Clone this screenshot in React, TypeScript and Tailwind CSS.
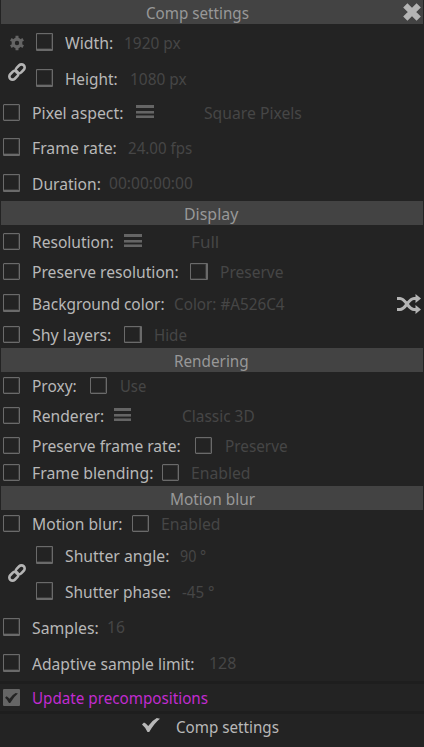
import { useLayoutEffect, useRef, useState, type ReactNode } from 'react';

function Fit({ children, className }: { children: string; className: string }) {
  const outer = useRef<HTMLSpanElement>(null);
  const inner = useRef<HTMLSpanElement>(null);
  const [scale, setScale] = useState(1);
  useLayoutEffect(() => {
    if (outer.current && inner.current) {
      setScale(outer.current.clientWidth / inner.current.offsetWidth);
    }
  }, [children]);
  return (
    <span className={`block shrink-0 whitespace-nowrap ${className}`}>
      <span ref={outer} className="block w-full">
        <span ref={inner} className="inline-block origin-left" style={{ transform: `scaleX(${scale})` }}>
          {children}
        </span>
      </span>
    </span>
  );
}

function Box({ className }: { className: string }) {
  return (
    <span className={`block shrink-0 rounded-[1px] border border-[#6a6a6a] bg-[#232323] shadow-[inset_-1px_-1px_0_#3a3a3a,inset_0_1px_0_#303030] ${className}`} />
  );
}

function Header({ children, className, text }: { children: string; className: string; text: string }) {
  return (
    <div className={`mx-px flex h-6 shrink-0 bg-[#434343] leading-[26px] text-[#989898] ${className}`}>
      <Fit className={`px-px ${text}`}>{children}</Fit>
    </div>
  );
}

function Row({ children, className, tall }: { children: ReactNode; className: string; tall?: boolean }) {
  return (
    <div className={`flex h-[18px] shrink-0 items-start pl-[3px] ${tall ? 'leading-[20px]' : 'leading-[18px]'} ${className}`}>
      <Box className={tall ? 'h-[18px] w-[17px] border-b-2' : 'h-[17px] w-[17px]'} />
      {children}
    </div>
  );
}

function Label({ children, className }: { children: string; className: string }) {
  return <Fit className={`ml-3 pr-px text-[#b8b8b8] ${className}`}>{children}</Fit>;
}

function Value({ children, className }: { children: string; className: string }) {
  return <Fit className={`px-px text-[#464646] ${className}`}>{children}</Fit>;
}

function Burger({ className }: { className: string }) {
  return (
    <span className={`mt-px flex h-[13px] shrink-0 flex-col ${className}`}>
      <span className="h-[3px] bg-[#656565]" />
      <span className="mt-[3px] h-[2px] bg-[#656565]" />
      <span className="h-px bg-[#484848]" />
      <span className="mt-px h-px bg-[#484848]" />
      <span className="h-[2px] bg-[#656565]" />
    </span>
  );
}

function LinkIcon({ className }: { className: string }) {
  return (
    <svg viewBox="0 0 18 18" className={`h-[18px] w-[18px] ${className}`} fill="none" stroke="#b4b4b4" strokeWidth="2.6">
      <rect x="-5" y="-3.2" width="10" height="6.4" rx="3.2" transform="translate(12.2 5.8) rotate(-45)" />
      <rect x="-5" y="-3.2" width="10" height="6.4" rx="3.2" transform="translate(5.8 12.2) rotate(-45)" />
    </svg>
  );
}

function GearIcon() {
  return (
    <svg viewBox="-8 -8 16 16" className="mt-[2px] ml-px h-4 w-4" fill="none" stroke="#646464">
      <circle r="3.8" strokeWidth="3.2" />
      <path strokeWidth="3" d="M0-4.5V-7.2M0 4.5V7.2M3.9-2.25L6.2-3.6M-3.9-2.25L-6.2-3.6M3.9 2.25L6.2 3.6M-3.9 2.25L-6.2 3.6" />
    </svg>
  );
}

function Check({ className }: { className: string }) {
  return (
    <svg viewBox="0 0 18 14" className={className} fill="currentColor">
      <path d="M0 6.5L2 4.6Q4 5.6 6.2 8Q10 2.5 14.8 0L18 .8Q12.5 5 7.2 14H5.5Q3.5 9.5 0 6.5Z" />
    </svg>
  );
}

export default function App() {
  return (
    <div className="flex h-[747px] w-[424px] flex-col overflow-hidden bg-[#232323] font-['Noto_Sans',sans-serif] text-[16.5px]">
      <Header className="relative" text="ml-[144px] w-[105px]">Comp settings</Header>
      <svg viewBox="0 0 18 18" className="absolute top-[3px] left-[403px] h-[18px] w-[18px]" fill="none" stroke="#b4b4b4" strokeWidth="6" strokeLinejoin="round">
        <path d="M2.3 2.3L15.7 15.7M15.7 2.3L2.3 15.7" />
      </svg>

      <div className="mt-[9px] flex h-[54px] shrink-0">
        <div className="w-[33px] pl-[8px]">
          <GearIcon />
          <LinkIcon className="mt-[12px]" />
        </div>
        <div>
          <Row tall className="">
            <Label className="w-[49px]">Width:</Label>
            <Value className="ml-[9px] w-[59px]">1920 px</Value>
          </Row>
          <Row tall className="mt-[18px]">
            <Label className="w-[54px]">Height:</Label>
            <Value className="ml-[10px] w-[59px]">1080 px</Value>
          </Row>
        </div>
      </div>
      <Row className="mt-[17px]">
        <Label className="w-[92px]">Pixel aspect:</Label>
        <Burger className="ml-[12px] w-[18px]" />
        <Value className="ml-[49px] w-[100px]">Square Pixels</Value>
      </Row>
      <Row tall className="mt-[16px]">
        <Label className="w-[86px]">Frame rate:</Label>
        <Value className="ml-[9px] w-[66px]">24.00 fps</Value>
      </Row>
      <Row tall className="mt-[18px]">
        <Label className="w-[70px]">Duration:</Label>
        <Value className="-mt-px ml-[6px] w-[86px]">00:00:00:00</Value>
      </Row>

      <Header className="mt-[9px]" text="ml-[182px] w-[56px]">Display</Header>
      <Row className="mt-[8px]">
        <Label className="w-[83px]">Resolution:</Label>
        <Burger className="ml-[9px] w-[18px]" />
        <Value className="ml-[48px] w-[30px]">Full</Value>
      </Row>
      <Row className="mt-[12px]">
        <Label className="w-[148px]">Preserve resolution:</Label>
        <Box className="ml-[10px] h-[17px] w-[18px] border-r-2" />
        <Value className="ml-[11px] w-[66px]">Preserve</Value>
      </Row>
      <Row tall className="mt-[13px]">
        <Label className="w-[134px]">Background color:</Label>
        <Value className="ml-[7px] w-[113px]">Color: #A526C4</Value>
        <svg viewBox="0 0 24 20" className="ml-[111px] h-5 w-6 shrink-0" fill="none" stroke="#b4b4b4" strokeWidth="3">
          <path d="M0 4.5H3C9 4.5 11 15.5 17 15.5H20M0 15.5H3C9 15.5 11 4.5 17 4.5H20" />
          <path fill="#b4b4b4" stroke="none" d="M18.5 0L24 4.5L18.5 9ZM18.5 11L24 15.5L18.5 20Z" />
        </svg>
      </Row>
      <Row className="mt-[14px]">
        <Label className="w-[80px]">Shy layers:</Label>
        <Box className="ml-[12px] h-[17px] w-[18px] border-r-2" />
        <Value className="ml-[11px] w-[35px]">Hide</Value>
      </Row>

      <Header className="mt-[4px]" text="ml-[172px] w-[77px]">Rendering</Header>
      <Row className="mt-[5px]">
        <Label className="w-[46px]">Proxy:</Label>
        <Box className="ml-[12px] h-[17px] w-[17px]" />
        <Value className="ml-[12px] w-[28px]">Use</Value>
      </Row>
      <Row className="mt-[12px]">
        <Label className="w-[73px]">Renderer:</Label>
        <Burger className="ml-[9px] w-[17px]" />
        <Value className="ml-[50px] w-[75px]">Classic 3D</Value>
      </Row>
      <Row className="mt-[12px]">
        <Label className="w-[150px]">Preserve frame rate:</Label>
        <Box className="ml-[13px] h-[17px] w-[17px]" />
        <Value className="ml-[12px] w-[65px]">Preserve</Value>
      </Row>
      <Row className="mt-[9px]">
        <Label className="w-[122px]">Frame blending:</Label>
        <Box className="ml-[8px] h-[17px] w-[17px]" />
        <Value className="ml-[11px] w-[62px]">Enabled</Value>
      </Row>

      <Header className="mt-[4px]" text="ml-[168px] w-[87px]">Motion blur</Header>
      <Row className="mt-[5px]">
        <Label className="w-[91px]">Motion blur:</Label>
        <Box className="ml-[9px] h-[17px] w-[17px]" />
        <Value className="ml-[11px] w-[62px]">Enabled</Value>
      </Row>
      <div className="mt-[13px] flex h-[54px] shrink-0">
        <div className="w-[33px] pt-[18px] pl-[8px]">
          <LinkIcon className="" />
        </div>
        <div>
          <Row tall className="">
            <Label className="w-[105px]">Shutter angle:</Label>
            <Value className="ml-[9px] w-[28px]">90 °</Value>
          </Row>
          <Row tall className="mt-[18px]">
            <Label className="w-[107px]">Shutter phase:</Label>
            <Value className="ml-[9px] w-[35px]">-45 °</Value>
          </Row>
        </div>
      </div>
      <Row tall className="mt-[18px]">
        <Label className="w-[68px]">Samples:</Label>
        <Value className="-mt-px ml-[6px] w-[20px]">16</Value>
      </Row>
      <Row tall className="mt-[18px]">
        <Label className="w-[163px]">Adaptive sample limit:</Label>
        <Value className="-mt-px ml-[13px] w-[29px]">128</Value>
      </Row>

      <div className="mt-[9px] h-[3px] shrink-0 bg-[#1e1e1e]" />
      <div className="mt-[5px] flex h-[17px] shrink-0 items-start pl-[3px] leading-[18px]">
        <span className="flex h-[17px] w-[17px] items-center justify-center rounded-[1px] bg-[#656565]">
          <Check className="h-[10px] w-[13px] text-[#232323]" />
        </span>
        <Fit className="ml-3 w-[177px] pr-px text-[#c12bd0]">Update precompositions</Fit>
      </div>
      <div className="mt-[5px] h-[3px] shrink-0 bg-[#1e1e1e]" />
      <div className="mt-[4px] flex items-start pl-[142px] leading-[18px] text-[#b8b8b8]">
        <Check className="h-[14px] w-[18px]" />
        <Fit className="ml-[16px] w-[104px] pr-px">Comp settings</Fit>
      </div>
    </div>
  );
}
